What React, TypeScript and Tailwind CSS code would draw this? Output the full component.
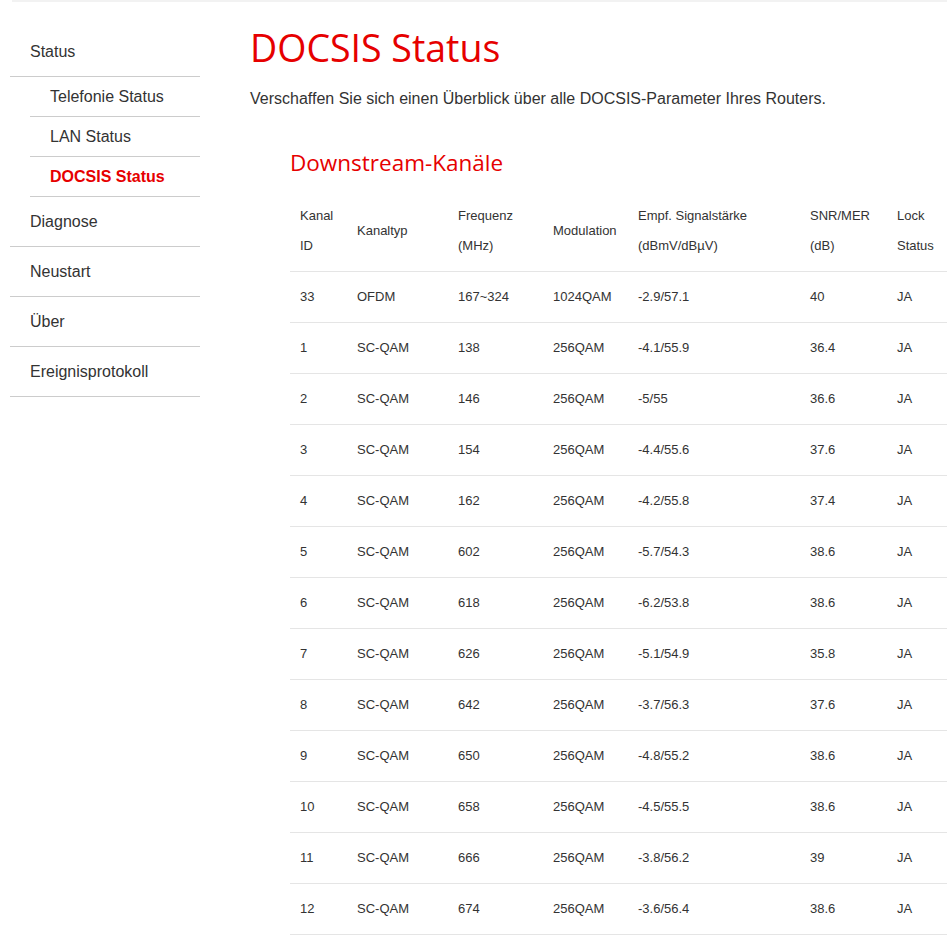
import React from "react";

const rows = [
  ["33", "OFDM", "167~324", "1024QAM", "-2.9/57.1", "40", "JA"],
  ["1", "SC-QAM", "138", "256QAM", "-4.1/55.9", "36.4", "JA"],
  ["2", "SC-QAM", "146", "256QAM", "-5/55", "36.6", "JA"],
  ["3", "SC-QAM", "154", "256QAM", "-4.4/55.6", "37.6", "JA"],
  ["4", "SC-QAM", "162", "256QAM", "-4.2/55.8", "37.4", "JA"],
  ["5", "SC-QAM", "602", "256QAM", "-5.7/54.3", "38.6", "JA"],
  ["6", "SC-QAM", "618", "256QAM", "-6.2/53.8", "38.6", "JA"],
  ["7", "SC-QAM", "626", "256QAM", "-5.1/54.9", "35.8", "JA"],
  ["8", "SC-QAM", "642", "256QAM", "-3.7/56.3", "37.6", "JA"],
  ["9", "SC-QAM", "650", "256QAM", "-4.8/55.2", "38.6", "JA"],
  ["10", "SC-QAM", "658", "256QAM", "-4.5/55.5", "38.6", "JA"],
  ["11", "SC-QAM", "666", "256QAM", "-3.8/56.2", "39", "JA"],
  ["12", "SC-QAM", "674", "256QAM", "-3.6/56.4", "38.6", "JA"],
];

const headers = [
  ["Kanal", "ID"],
  ["Kanaltyp"],
  ["Frequenz", "(MHz)"],
  ["Modulation"],
  ["Empf. Signalstärke", "(dBmV/dBµV)"],
  ["SNR/MER", "(dB)"],
  ["Lock", "Status"],
];

const colWidths = ["w-[57px]", "w-[101px]", "w-[95px]", "w-[85px]", "w-[172px]", "w-[87px]", "w-[70px]"];

function Sidebar() {
  const sub = ["Telefonie Status", "LAN Status", "DOCSIS Status"];
  const main = ["Diagnose", "Neustart", "Über", "Ereignisprotokoll"];
  return (
    <nav className="w-[190px] shrink-0 mt-[24px] text-[16px] text-[#333]">
      <ul>
        <li>
          <div className="h-[50px] flex items-center pl-[20px] border-b border-[#cccccc]">Status</div>
          <ul className="ml-[20px]">
            {sub.map((s) => (
              <li
                key={s}
                className={`h-[40px] flex items-center pl-[20px] border-b border-[#cccccc] ${
                  s === "DOCSIS Status" ? "font-bold text-[#e60000]" : ""
                }`}
              >
                {s}
              </li>
            ))}
          </ul>
        </li>
        {main.map((m) => (
          <li key={m} className="h-[50px] flex items-center pl-[20px] border-b border-[#cccccc]">
            {m}
          </li>
        ))}
      </ul>
    </nav>
  );
}

export default function App() {
  return (
    <div className="w-[947px] h-[940px] overflow-hidden bg-white text-[#333] font-['Liberation_Sans',Arial,sans-serif]">
      <div className="h-[2px] ml-[12px] bg-[#f2f2f2]" />
      <div className="flex pl-[10px] pt-[1px] gap-[50px]">
        <Sidebar />

        {/* Main */}
        <main className="flex-1 min-w-0">
          <h1 className="mt-[19px] text-[37.5px] leading-[52px] text-[#e60000] font-['Open_Sans',sans-serif]">
            DOCSIS Status
          </h1>
          <p className="mt-[13px] text-[16px] leading-[24px] text-[#333]">
            Verschaffen Sie sich einen Überblick über alle DOCSIS-Parameter Ihres Routers.
          </p>

          <div className="ml-[40px]">
            <h2 className="mt-[36px] text-[22.5px] leading-[32px] text-[#e60000] font-['Open_Sans',sans-serif]">
              Downstream-Kanäle
            </h2>

            <table className="mt-[12px] table-fixed border-collapse w-[667px] text-[13px] text-[#333]">
              <thead>
                <tr className="border-b border-[#e5e5e5]">
                  {headers.map((h, i) => (
                    <th
                      key={i}
                      className={`${colWidths[i]} pl-[10px] py-[10px] text-left font-normal leading-[30px] align-middle whitespace-nowrap`}
                    >
                      {h.map((l) => (
                        <div key={l}>{l}</div>
                      ))}
                    </th>
                  ))}
                </tr>
              </thead>
              <tbody>
                {rows.map((r) => (
                  <tr key={r[0]} className="border-b border-[#e5e5e5]">
                    {r.map((c, i) => (
                      <td key={i} className="h-[51px] pl-[10px] align-middle whitespace-nowrap">
                        {c}
                      </td>
                    ))}
                  </tr>
                ))}
              </tbody>
            </table>
          </div>
        </main>
      </div>
    </div>
  );
}
